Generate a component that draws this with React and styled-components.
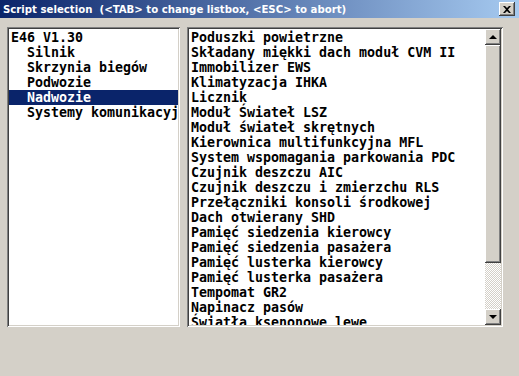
import React from 'react';
import styled, { createGlobalStyle } from 'styled-components';

const GlobalStyle = createGlobalStyle`
  html, body {
    margin: 0;
    padding: 0;
    background: #d4d0c8;
  }
`;

const modules = [
  'E46 V1.30',
  '  Silnik',
  '  Skrzynia biegów',
  '  Podwozie',
  '  Nadwozie',
  '  Systemy komunikacyjne',
];

const scripts = [
  'Poduszki powietrzne',
  'Składany miękki dach moduł CVM II',
  'Immobilizer EWS',
  'Klimatyzacja IHKA',
  'Licznik',
  'Moduł Świateł LSZ',
  'Moduł świateł skrętnych',
  'Kierownica multifunkcyjna MFL',
  'System wspomagania parkowania PDC',
  'Czujnik deszczu AIC',
  'Czujnik deszczu i zmierzchu RLS',
  'Przełączniki konsoli środkowej',
  'Dach otwierany SHD',
  'Pamięć siedzenia kierowcy',
  'Pamięć siedzenia pasażera',
  'Pamięć lusterka kierowcy',
  'Pamięć lusterka pasażera',
  'Tempomat GR2',
  'Napinacz pasów',
  'Światła ksenonowe lewe',
];

const App = () => {
  return (
    <>
      <GlobalStyle />
      <Window>
        <TitleBar>
          <Title>Script selection&nbsp;&nbsp;(&lt;TAB&gt; to change listbox, &lt;ESC&gt; to abort)</Title>
          <CloseButton>
            <svg width="8" height="7" viewBox="0 0 8 7">
              <path d="M0 0h2l2 2 2-2h2L5 3.5 8 7H6L4 5 2 7H0l3-3.5z" fill="#000" />
            </svg>
          </CloseButton>
        </TitleBar>
        <Body>
          <ListBox width={173}>
            <Items>
              {modules.map((m, i) => (
                <Row key={i} selected={i === 4}>{m}</Row>
              ))}
            </Items>
          </ListBox>
          <ListBox width={316}>
            <Items>
              {scripts.map((s, i) => (
                <Row key={i}>{s}</Row>
              ))}
            </Items>
            <ScrollBar>
              <ArrowButton><Arrow /></ArrowButton>
              <Thumb />
              <Track />
              <ArrowButton><Arrow down /></ArrowButton>
            </ScrollBar>
          </ListBox>
        </Body>
      </Window>
    </>
  );
};

const Window = styled.div`
  width: 519px;
  height: 376px;
  display: flex;
  flex-direction: column;
  background: #d4d0c8;
  overflow: hidden;
`;

const TitleBar = styled.div`
  height: 18px;
  display: flex;
  align-items: center;
  justify-content: space-between;
  padding: 0 4px 0 3px;
  background: linear-gradient(to right, #0a246a, #a6caf0);
`;

const Title = styled.span`
  font-family: 'DejaVu Sans Condensed', 'DejaVu Sans', sans-serif;
  font-weight: bold;
  font-size: 11.3px;
  color: #fff;
  white-space: nowrap;
`;

const bevel = `
  background: #d4d0c8;
  box-shadow: inset -1px -1px #404040, inset 1px 1px #fff,
    inset -2px -2px #808080, inset 2px 2px #d4d0c8;
`;

const CloseButton = styled.div`
  width: 16px;
  height: 14px;
  display: flex;
  align-items: center;
  justify-content: center;
  ${bevel}
`;

const Body = styled.div`
  display: flex;
  gap: 7px;
  padding: 9px 0 0 7px;
`;

const ListBox = styled.div`
  width: ${p => p.width}px;
  height: 300px;
  box-sizing: border-box;
  display: flex;
  background: #fff;
  box-shadow: inset 1px 1px #808080, inset -1px -1px #fff,
    inset 2px 2px #404040, inset -2px -2px #d4d0c8;
  padding: 2px;
  overflow: hidden;
`;

const Items = styled.div`
  flex: 1;
  min-width: 0;
  padding-top: 1px;
  overflow: hidden;
`;

const Row = styled.div`
  height: 15px;
  line-height: 15px;
  padding-left: 2px;
  font-family: 'DejaVu Sans Mono', 'Liberation Mono', monospace;
  font-weight: bold;
  font-size: 13.3px;
  white-space: pre;
  color: ${p => (p.selected ? '#fff' : '#000')};
  background: ${p => (p.selected ? '#0a246a' : 'transparent')};
`;

const ScrollBar = styled.div`
  width: 16px;
  display: flex;
  flex-direction: column;
`;

const ArrowButton = styled.div`
  height: 16px;
  flex: none;
  display: flex;
  align-items: center;
  justify-content: center;
  ${bevel}
`;

const Arrow = styled.div`
  width: 0;
  height: 0;
  border-left: 4px solid transparent;
  border-right: 4px solid transparent;
  ${p => (p.down ? 'border-top: 4px solid #000;' : 'border-bottom: 4px solid #000;')}
`;

const Thumb = styled.div`
  height: 218px;
  flex: none;
  ${bevel}
`;

const Track = styled.div`
  flex: 1;
  background: repeating-conic-gradient(#d4d0c8 0 25%, #fff 0 50%) 0 0 / 2px 2px;
`;

export default App;
